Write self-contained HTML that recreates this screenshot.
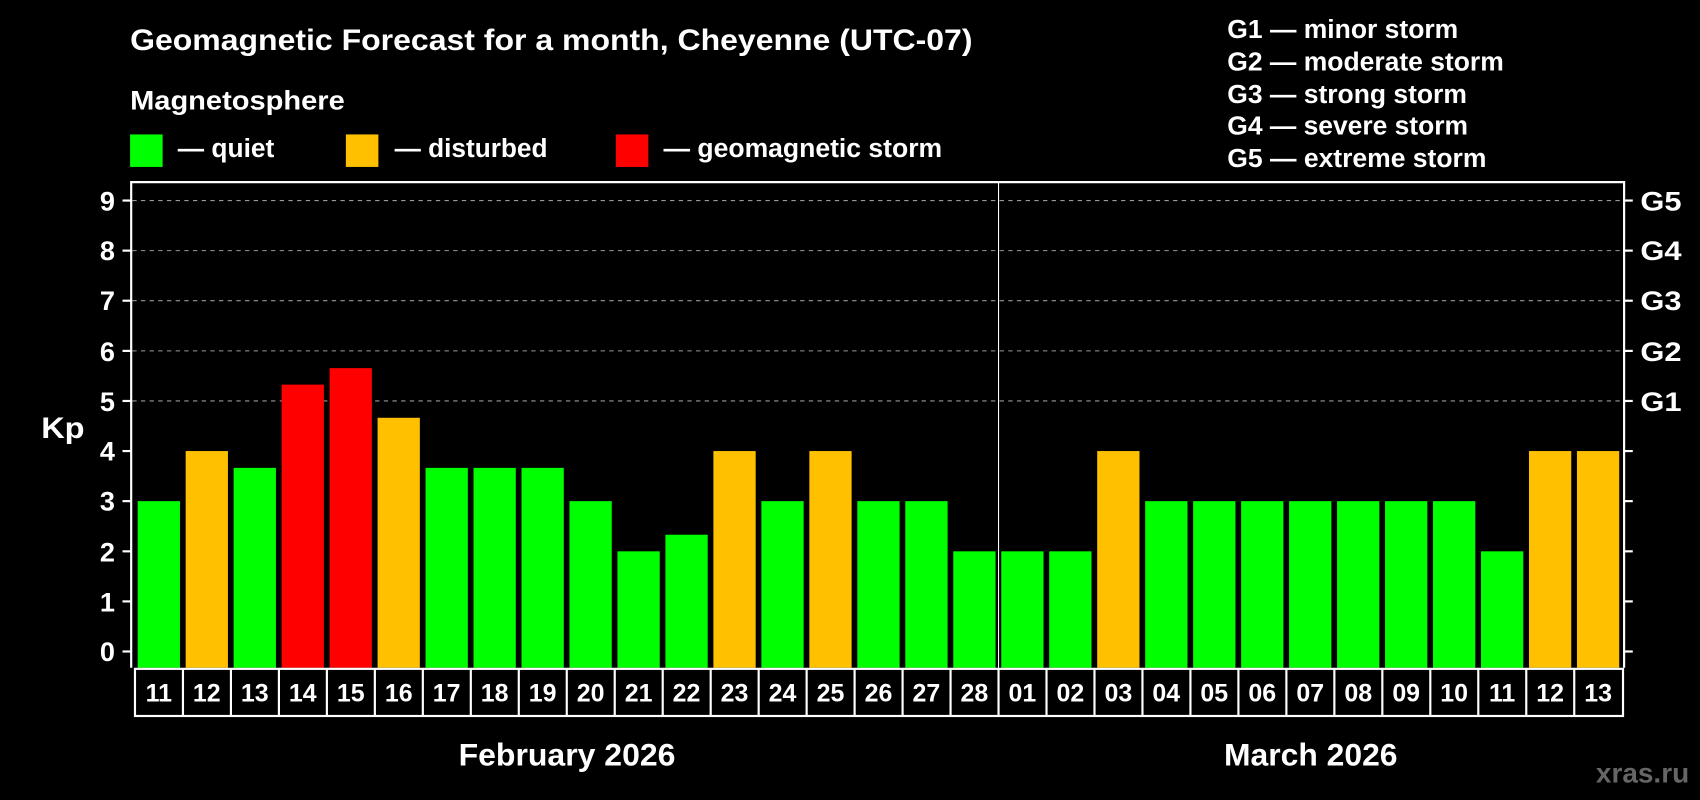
<!DOCTYPE html>
<html><head><meta charset="utf-8"><style>
html,body{margin:0;padding:0;background:#000;width:1700px;height:800px;overflow:hidden}
svg{display:block}
text{font-family:"Liberation Sans",Arial,sans-serif;font-weight:bold;fill:#fff}
</style></head><body>
<svg width="1700" height="800" viewBox="0 0 1568 738" preserveAspectRatio="none" xmlns="http://www.w3.org/2000/svg">
<rect width="1568" height="738" fill="#000"/>
<text x="120" y="46" font-size="27" textLength="777" lengthAdjust="spacingAndGlyphs">Geomagnetic Forecast for a month, Cheyenne (UTC-07)</text>
<text x="120" y="101" font-size="25" textLength="198" lengthAdjust="spacingAndGlyphs">Magnetosphere</text>
<rect x="120" y="124" width="30" height="30" fill="#00ff00"/>
<text x="164" y="145" font-size="24" textLength="89" lengthAdjust="spacingAndGlyphs">— quiet</text>
<rect x="319" y="124" width="30" height="30" fill="#ffc000"/>
<text x="364" y="145" font-size="24" textLength="141" lengthAdjust="spacingAndGlyphs">— disturbed</text>
<rect x="568" y="124" width="30" height="30" fill="#ff0000"/>
<text x="612" y="145" font-size="24" textLength="257" lengthAdjust="spacingAndGlyphs">— geomagnetic storm</text>
<g font-size="24">
<text x="1132" y="35" textLength="213" lengthAdjust="spacingAndGlyphs">G1 — minor storm</text>
<text x="1132" y="65" textLength="255" lengthAdjust="spacingAndGlyphs">G2 — moderate storm</text>
<text x="1132" y="95" textLength="221" lengthAdjust="spacingAndGlyphs">G3 — strong storm</text>
<text x="1132" y="124" textLength="222" lengthAdjust="spacingAndGlyphs">G4 — severe storm</text>
<text x="1132" y="154" textLength="239" lengthAdjust="spacingAndGlyphs">G5 — extreme storm</text>
</g>
<g stroke="#999" stroke-width="1" stroke-dasharray="4,4">
<line x1="122" y1="185.0" x2="1497" y2="185.0"/>
<line x1="122" y1="231.2" x2="1497" y2="231.2"/>
<line x1="122" y1="277.4" x2="1497" y2="277.4"/>
<line x1="122" y1="323.7" x2="1497" y2="323.7"/>
<line x1="122" y1="369.9" x2="1497" y2="369.9"/>
</g>
<line x1="921" y1="168" x2="921" y2="616" stroke="#fff" stroke-width="1"/>
<g>
<rect x="127" y="462.3" width="39" height="153.7" fill="#00ff00"/>
<rect x="171.25" y="416.1" width="39" height="199.9" fill="#ffc000"/>
<rect x="215.5" y="431.6" width="39" height="184.4" fill="#00ff00"/>
<rect x="259.75" y="354.8" width="39" height="261.2" fill="#ff0000"/>
<rect x="304" y="339.6" width="39" height="276.4" fill="#ff0000"/>
<rect x="348.25" y="385.4" width="39" height="230.6" fill="#ffc000"/>
<rect x="392.5" y="431.6" width="39" height="184.4" fill="#00ff00"/>
<rect x="436.75" y="431.6" width="39" height="184.4" fill="#00ff00"/>
<rect x="481" y="431.6" width="39" height="184.4" fill="#00ff00"/>
<rect x="525.25" y="462.3" width="39" height="153.7" fill="#00ff00"/>
<rect x="569.5" y="508.6" width="39" height="107.4" fill="#00ff00"/>
<rect x="613.75" y="493.3" width="39" height="122.7" fill="#00ff00"/>
<rect x="658" y="416.1" width="39" height="199.9" fill="#ffc000"/>
<rect x="702.25" y="462.3" width="39" height="153.7" fill="#00ff00"/>
<rect x="746.5" y="416.1" width="39" height="199.9" fill="#ffc000"/>
<rect x="790.75" y="462.3" width="39" height="153.7" fill="#00ff00"/>
<rect x="835" y="462.3" width="39" height="153.7" fill="#00ff00"/>
<rect x="879.25" y="508.6" width="39" height="107.4" fill="#00ff00"/>
<rect x="923.5" y="508.6" width="39" height="107.4" fill="#00ff00"/>
<rect x="967.75" y="508.6" width="39" height="107.4" fill="#00ff00"/>
<rect x="1012" y="416.1" width="39" height="199.9" fill="#ffc000"/>
<rect x="1056.25" y="462.3" width="39" height="153.7" fill="#00ff00"/>
<rect x="1100.5" y="462.3" width="39" height="153.7" fill="#00ff00"/>
<rect x="1144.75" y="462.3" width="39" height="153.7" fill="#00ff00"/>
<rect x="1189" y="462.3" width="39" height="153.7" fill="#00ff00"/>
<rect x="1233.25" y="462.3" width="39" height="153.7" fill="#00ff00"/>
<rect x="1277.5" y="462.3" width="39" height="153.7" fill="#00ff00"/>
<rect x="1321.75" y="462.3" width="39" height="153.7" fill="#00ff00"/>
<rect x="1366" y="508.6" width="39" height="107.4" fill="#00ff00"/>
<rect x="1410.25" y="416.1" width="39" height="199.9" fill="#ffc000"/>
<rect x="1454.5" y="416.1" width="39" height="199.9" fill="#ffc000"/>
</g>
<polyline points="121,616 121,168 1498,168 1498,616" fill="none" stroke="#fff" stroke-width="2"/>
<g stroke="#fff" stroke-width="2">
<line x1="113" y1="601" x2="121" y2="601"/><line x1="113" y1="554.8" x2="121" y2="554.8"/>
<line x1="113" y1="508.6" x2="121" y2="508.6"/><line x1="113" y1="462.3" x2="121" y2="462.3"/>
<line x1="113" y1="416.1" x2="121" y2="416.1"/><line x1="113" y1="369.9" x2="121" y2="369.9"/>
<line x1="113" y1="323.7" x2="121" y2="323.7"/><line x1="113" y1="277.4" x2="121" y2="277.4"/>
<line x1="113" y1="231.2" x2="121" y2="231.2"/><line x1="113" y1="185" x2="121" y2="185"/>
<line x1="1498" y1="601" x2="1506" y2="601"/><line x1="1498" y1="554.8" x2="1506" y2="554.8"/>
<line x1="1498" y1="508.6" x2="1506" y2="508.6"/><line x1="1498" y1="462.3" x2="1506" y2="462.3"/>
<line x1="1498" y1="416.1" x2="1506" y2="416.1"/><line x1="1498" y1="369.9" x2="1506" y2="369.9"/>
<line x1="1498" y1="323.7" x2="1506" y2="323.7"/><line x1="1498" y1="277.4" x2="1506" y2="277.4"/>
<line x1="1498" y1="231.2" x2="1506" y2="231.2"/><line x1="1498" y1="185" x2="1506" y2="185"/>
</g>
<g font-size="25" text-anchor="end">
<text x="106" y="610">0</text><text x="106" y="564">1</text><text x="106" y="518">2</text>
<text x="106" y="471">3</text><text x="106" y="425">4</text><text x="106" y="379">5</text>
<text x="106" y="333">6</text><text x="106" y="286">7</text><text x="106" y="240">8</text>
<text x="106" y="194">9</text>
</g>
<text x="38" y="404" font-size="27" textLength="40" lengthAdjust="spacingAndGlyphs">Kp</text>
<g font-size="25">
<text x="1513" y="194" textLength="38" lengthAdjust="spacingAndGlyphs">G5</text><text x="1513" y="240" textLength="38" lengthAdjust="spacingAndGlyphs">G4</text><text x="1513" y="286" textLength="38" lengthAdjust="spacingAndGlyphs">G3</text>
<text x="1513" y="333" textLength="38" lengthAdjust="spacingAndGlyphs">G2</text><text x="1513" y="379" textLength="38" lengthAdjust="spacingAndGlyphs">G1</text>
</g>
<rect x="124.5" y="617" width="1372.5" height="43.5" fill="none" stroke="#fff" stroke-width="2"/>
<g stroke="#fff" stroke-width="2">
<line x1="168.75" y1="617" x2="168.75" y2="660.5"/><line x1="213" y1="617" x2="213" y2="660.5"/>
<line x1="257.25" y1="617" x2="257.25" y2="660.5"/><line x1="301.5" y1="617" x2="301.5" y2="660.5"/>
<line x1="345.75" y1="617" x2="345.75" y2="660.5"/><line x1="390" y1="617" x2="390" y2="660.5"/>
<line x1="434.25" y1="617" x2="434.25" y2="660.5"/><line x1="478.5" y1="617" x2="478.5" y2="660.5"/>
<line x1="522.75" y1="617" x2="522.75" y2="660.5"/><line x1="567" y1="617" x2="567" y2="660.5"/>
<line x1="611.25" y1="617" x2="611.25" y2="660.5"/><line x1="655.5" y1="617" x2="655.5" y2="660.5"/>
<line x1="699.75" y1="617" x2="699.75" y2="660.5"/><line x1="744" y1="617" x2="744" y2="660.5"/>
<line x1="788.25" y1="617" x2="788.25" y2="660.5"/><line x1="832.5" y1="617" x2="832.5" y2="660.5"/>
<line x1="876.75" y1="617" x2="876.75" y2="660.5"/><line x1="921" y1="617" x2="921" y2="660.5"/>
<line x1="965.25" y1="617" x2="965.25" y2="660.5"/><line x1="1009.5" y1="617" x2="1009.5" y2="660.5"/>
<line x1="1053.75" y1="617" x2="1053.75" y2="660.5"/><line x1="1098" y1="617" x2="1098" y2="660.5"/>
<line x1="1142.25" y1="617" x2="1142.25" y2="660.5"/><line x1="1186.5" y1="617" x2="1186.5" y2="660.5"/>
<line x1="1230.75" y1="617" x2="1230.75" y2="660.5"/><line x1="1275" y1="617" x2="1275" y2="660.5"/>
<line x1="1319.25" y1="617" x2="1319.25" y2="660.5"/><line x1="1363.5" y1="617" x2="1363.5" y2="660.5"/>
<line x1="1407.75" y1="617" x2="1407.75" y2="660.5"/><line x1="1452" y1="617" x2="1452" y2="660.5"/>
</g>
<g font-size="23" text-anchor="middle">
<text x="146.5" y="647">11</text><text x="190.75" y="647">12</text><text x="235" y="647">13</text>
<text x="279.25" y="647">14</text><text x="323.5" y="647">15</text><text x="367.75" y="647">16</text>
<text x="412" y="647">17</text><text x="456.25" y="647">18</text><text x="500.5" y="647">19</text>
<text x="544.75" y="647">20</text><text x="589" y="647">21</text><text x="633.25" y="647">22</text>
<text x="677.5" y="647">23</text><text x="721.75" y="647">24</text><text x="766" y="647">25</text>
<text x="810.25" y="647">26</text><text x="854.5" y="647">27</text><text x="898.75" y="647">28</text>
<text x="943" y="647">01</text><text x="987.25" y="647">02</text><text x="1031.5" y="647">03</text>
<text x="1075.75" y="647">04</text><text x="1120" y="647">05</text><text x="1164.25" y="647">06</text>
<text x="1208.5" y="647">07</text><text x="1252.75" y="647">08</text><text x="1297" y="647">09</text>
<text x="1341.25" y="647">10</text><text x="1385.5" y="647">11</text><text x="1429.75" y="647">12</text>
<text x="1474" y="647">13</text>
</g>
<text x="423" y="706" font-size="29" textLength="200" lengthAdjust="spacingAndGlyphs">February 2026</text>
<text x="1129" y="706" font-size="29" textLength="160" lengthAdjust="spacingAndGlyphs">March 2026</text>
<text x="1472" y="722" font-size="26" textLength="86" lengthAdjust="spacingAndGlyphs" style="fill:#666">xras.ru</text>
</svg>
</body></html>
